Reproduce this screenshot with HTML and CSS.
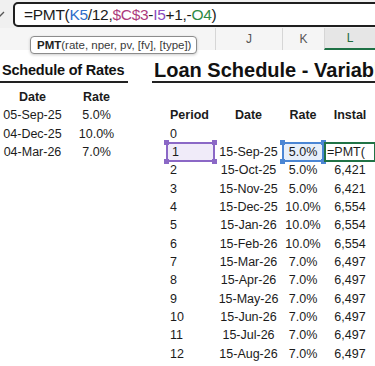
FILE: index.html
```html
<!DOCTYPE html>
<html>
<head>
<link rel="stylesheet" href="styles.css">
</head>
<body>

<div class="formula-bar">
  <span class="check">
    <svg width="13" height="25" viewBox="0 0 13 25"><polyline points="-4,12 -1,15 4,10" fill="none" stroke="#555" stroke-width="1.3"/></svg>
  </span>
  <div class="formula-box">=PMT(<span class="ref-k">K5</span>/12,<span class="ref-c">$C$3</span>-<span class="ref-i">I5</span>+1,-<span class="ref-o">O4</span>)</div>
</div>

<div class="col-heads">
  <div class="col-head blank"></div>
  <div class="col-head col-j">J</div>
  <div class="col-head col-k">K</div>
  <div class="col-head col-l selected">L</div>
  <div class="tooltip"><b>PMT</b>(rate, nper, pv, [fv], [type])</div>
</div>

<div class="sheet">
  <div class="rates">
    <div class="title">Schedule of Rates</div>
    <div class="rate-grid">
      <div class="cell head">Date</div><div class="cell head">Rate</div>
      <div class="cell">05-Sep-25</div><div class="cell">5.0%</div>
      <div class="cell">04-Dec-25</div><div class="cell">10.0%</div>
      <div class="cell">04-Mar-26</div><div class="cell">7.0%</div>
    </div>
  </div>

  <div class="loan">
    <div class="title">Loan Schedule - Variable Rate</div>
    <div class="loan-grid" id="loan-grid">
      <div class="cell"></div><div class="cell"></div><div class="cell"></div><div class="cell"></div>
      <div class="cell head period">Period</div><div class="cell head">Date</div><div class="cell head">Rate</div><div class="cell head">Instal</div>
      <div class="cell period">0</div><div class="cell"></div><div class="cell"></div><div class="cell"></div>
      <div class="cell period sel sel-purple">1</div><div class="cell">15-Sep-25</div><div class="cell sel sel-blue">5.0%</div><div class="cell sel sel-green">=PMT(</div>
    </div>
  </div>
</div>

<script>
  const rows = [
    ['2', '15-Oct-25', '5.0%', '6,421'],
    ['3', '15-Nov-25', '5.0%', '6,421'],
    ['4', '15-Dec-25', '10.0%', '6,554'],
    ['5', '15-Jan-26', '10.0%', '6,554'],
    ['6', '15-Feb-26', '10.0%', '6,554'],
    ['7', '15-Mar-26', '7.0%', '6,497'],
    ['8', '15-Apr-26', '7.0%', '6,497'],
    ['9', '15-May-26', '7.0%', '6,497'],
    ['10', '15-Jun-26', '7.0%', '6,497'],
    ['11', '15-Jul-26', '7.0%', '6,497'],
    ['12', '15-Aug-26', '7.0%', '6,497']
  ];

  const grid = document.getElementById('loan-grid');
  rows.forEach(function(row) {
    row.forEach(function(value, i) {
      const cell = document.createElement('div');
      cell.className = i === 0 ? 'cell period' : 'cell';
      cell.textContent = value;
      grid.appendChild(cell);
    });
  });
</script>

</body>
</html>
```

FILE: styles.css
```css
body {
  margin: 0;
  width: 375px;
  height: 366px;
  overflow: hidden;
  background-color: #fff;
  color: #1b1b1b;
  font-family: "Liberation Sans", Arial, sans-serif;
}

.formula-bar {
  height: 28px;
  background-color: #f0f0f0;
  display: flex;
  align-items: flex-start;
  overflow: hidden;
}

.check {
  flex: none;
  width: 13px;
  height: 25px;
  margin-top: 2px;
}

.check svg {
  display: block;
  overflow: visible;
}

.formula-box {
  flex: 1;
  height: 21px;
  margin-top: 2px;
  margin-right: -12px;
  padding-left: 9px;
  border: 2px solid #1f1f1f;
  border-radius: 5px;
  background-color: #fff;
  font-size: 15.5px;
  letter-spacing: -0.3px;
  line-height: 21px;
  white-space: nowrap;
  color: #1b1b1b;
}

.ref-k {
  color: #2f6fcb;
}

.ref-c {
  color: #ad3a7c;
}

.ref-i {
  color: #8a4cc0;
}

.ref-o {
  color: #2f8a45;
}

.col-heads {
  position: relative;
  height: 22px;
  display: flex;
  background-color: #f5f5f5;
}

.col-head {
  box-sizing: border-box;
  height: 22px;
  border-left: 1px solid #d6d6d6;
  text-align: center;
  font-size: 12px;
  line-height: 22px;
  color: #555;
}

.col-head.blank {
  width: 215px;
  border-left: none;
}

.col-j {
  width: 67px;
}

.col-k {
  width: 42px;
}

.col-l {
  flex: 1;
}

.col-head.selected {
  background-color: #e6e6e6;
  color: #1f6b3c;
  border-bottom: 2px solid #1e7145;
  line-height: 21px;
}

.tooltip {
  position: absolute;
  left: 30px;
  top: 8px;
  height: 16px;
  padding: 0 5px 0 6px;
  border: 1px solid #8c8c8c;
  border-radius: 4px;
  background-color: #fff;
  box-shadow: 0 1px 3px rgba(0, 0, 0, 0.2);
  font-size: 11.5px;
  line-height: 16px;
  color: #3a3a3a;
  white-space: nowrap;
}

.tooltip b {
  color: #222;
}

.sheet {
  display: flex;
  white-space: nowrap;
}

.rates {
  flex: none;
  width: 128px;
}

.title {
  box-sizing: border-box;
  height: 33px;
  padding-top: 10px;
  line-height: 20px;
  border-bottom: 2px solid #222;
  margin-bottom: 5px;
  font-weight: bold;
  color: #111;
}

.rates .title {
  font-size: 14.5px;
  letter-spacing: -0.2px;
  padding-left: 2px;
}

.loan {
  flex: 1;
  min-width: 0;
  margin-left: 24px;
}

.loan .title {
  font-size: 20px;
  padding-left: 2px;
  overflow: hidden;
}

.rate-grid {
  display: grid;
  grid-template-columns: 65px 63px;
  grid-auto-rows: 18.33px;
}

.loan-grid {
  display: grid;
  grid-template-columns: 49px 67px 42px 52px;
  grid-auto-rows: 18.33px;
  margin-left: 14px;
}

.cell {
  font-size: 12.5px;
  line-height: 18.33px;
  text-align: center;
}

.cell.head {
  font-weight: bold;
}

.cell.period {
  text-align: left;
  padding-left: 4px;
}

.sel {
  position: relative;
  box-sizing: border-box;
  margin: -1px 0;
  border: 2px solid;
  line-height: 16.33px;
}

.sel-purple {
  border-color: #8b68c6;
  background-color: #f0ebf9;
  padding-left: 2px;
}

.sel-blue {
  border-color: #4b86d4;
  background-color: #e7effa;
}

.sel-green {
  border-color: #217346;
  text-align: left;
  padding-left: 1px;
}

.sel-purple::before,
.sel-blue::before {
  content: "";
  position: absolute;
  left: -4px;
  top: -4px;
  width: 5px;
  height: 5px;
}

.sel-purple::before {
  background-color: #8b68c6;
  box-shadow: 48px 0 0 #8b68c6, 0 19px 0 #8b68c6, 48px 19px 0 #8b68c6;
}

.sel-blue::before {
  background-color: #4b86d4;
  box-shadow: 41px 0 0 #4b86d4, 0 19px 0 #4b86d4, 41px 19px 0 #4b86d4;
}
```
